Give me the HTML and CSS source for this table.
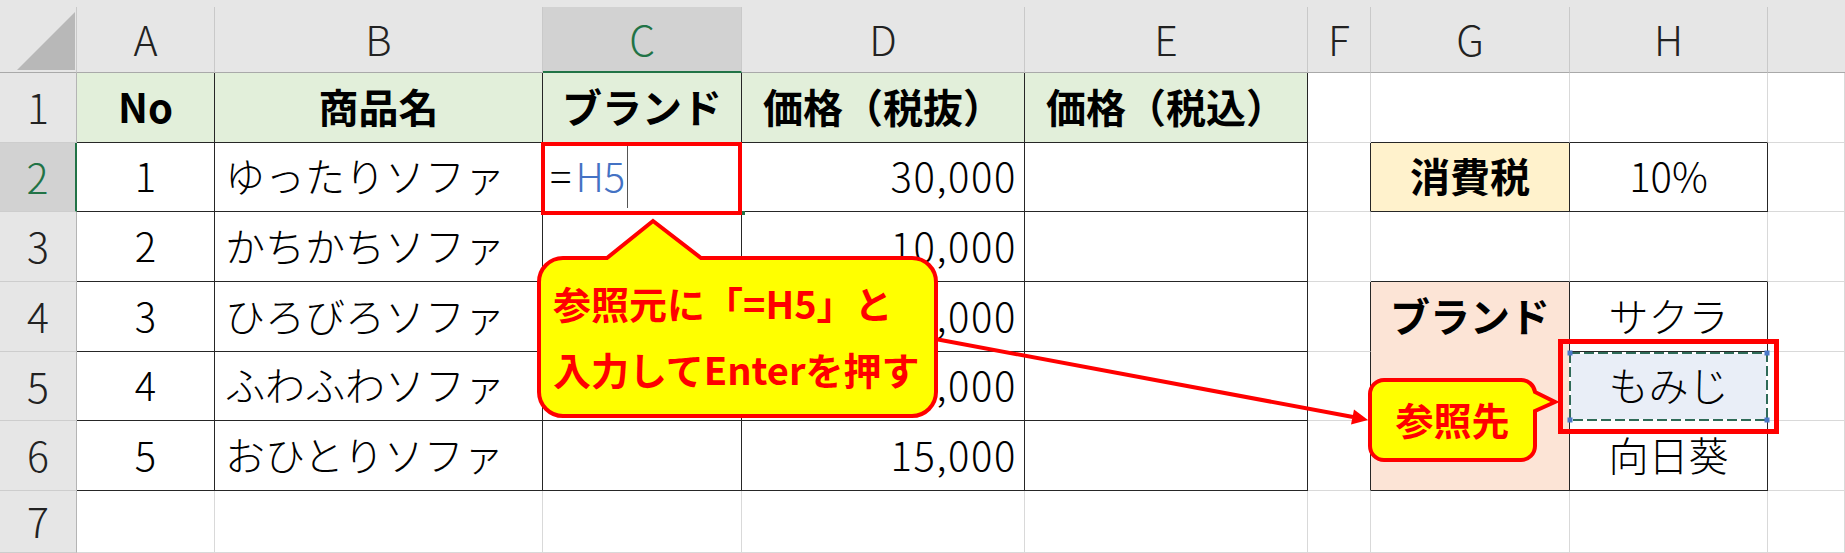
FILE: index.html
```html
<!DOCTYPE html>
<html lang="ja">
<head>
<meta charset="utf-8">
<title>参照</title>
<link rel="stylesheet" href="styles.css">
</head>
<body>
<div class="sheet">
  <div class="band"></div>
  <div class="hd corner"><svg class="tri" width="76" height="66" viewBox="0 0 76 66"><polygon points="17,63 75,63 75,5" fill="#b8b8b8"/></svg></div>
  <div class="hd">A</div>
  <div class="hd">B</div>
  <div class="hd sel">C</div>
  <div class="hd">D</div>
  <div class="hd">E</div>
  <div class="hd">F</div>
  <div class="hd">G</div>
  <div class="hd">H</div>
  <div class="hd end"></div>

  <div class="rh">1</div>
  <div class="c k th ctr">No</div>
  <div class="c k th ctr">商品名</div>
  <div class="c k th ctr">ブランド</div>
  <div class="c k th ctr">価格（税抜）</div>
  <div class="c k th ctr">価格（税込）</div>
  <div class="c"></div>
  <div class="c kb"></div>
  <div class="c kb"></div>
  <div class="c"></div>

  <div class="rh sel">2</div>
  <div class="c k ctr">1</div>
  <div class="c k lft">ゆったりソファ</div>
  <div class="c k edit"><span class="eq">=</span><span class="blue">H5</span><i class="caret"></i></div>
  <div class="c k num">30,000</div>
  <div class="c k"></div>
  <div class="c kr"></div>
  <div class="c k ctr bold tax">消費税</div>
  <div class="c k ctr">10%</div>
  <div class="c"></div>

  <div class="rh">3</div>
  <div class="c k ctr">2</div>
  <div class="c k lft">かちかちソファ</div>
  <div class="c k"></div>
  <div class="c k num">10,000</div>
  <div class="c k"></div>
  <div class="c"></div>
  <div class="c kb"></div>
  <div class="c kb"></div>
  <div class="c"></div>

  <div class="rh">4</div>
  <div class="c k ctr">3</div>
  <div class="c k lft">ひろびろソファ</div>
  <div class="c k"></div>
  <div class="c k num">20,000</div>
  <div class="c k"></div>
  <div class="c kr"></div>
  <div class="c k brand bold"><span class="brand-t">ブランド</span></div>
  <div class="c k ctr">サクラ</div>
  <div class="c"></div>

  <div class="rh">5</div>
  <div class="c k ctr">4</div>
  <div class="c k lft">ふわふわソファ</div>
  <div class="c k"></div>
  <div class="c k num">25,000</div>
  <div class="c k"></div>
  <div class="c kr"></div>
  <div class="c k ctr refcell">もみじ</div>
  <div class="c"></div>

  <div class="rh">6</div>
  <div class="c k ctr">5</div>
  <div class="c k lft">おひとりソファ</div>
  <div class="c k"></div>
  <div class="c k num">15,000</div>
  <div class="c k"></div>
  <div class="c kr"></div>
  <div class="c k ctr">向日葵</div>
  <div class="c"></div>

  <div class="rh">7</div>
  <div class="c"></div>
  <div class="c"></div>
  <div class="c"></div>
  <div class="c"></div>
  <div class="c"></div>
  <div class="c"></div>
  <div class="c"></div>
  <div class="c"></div>
  <div class="c"></div>

  <svg class="ov" width="1845" height="553" viewBox="0 0 1845 553">
    <rect x="741" y="211" width="4" height="4" fill="#217346"/>
    <rect x="543" y="144" width="197" height="69" fill="none" stroke="#ff0000" stroke-width="4"/>
    <rect x="1570" y="353" width="197" height="67" fill="none" stroke="#ffffff" stroke-width="2"/>
    <rect x="1570" y="353" width="197" height="67" fill="none" stroke="#2f6b58" stroke-width="2" stroke-dasharray="10 4"/>
    <rect x="1567.5" y="350.5" width="5" height="5" fill="#4a78c8"/>
    <rect x="1764.5" y="350.5" width="5" height="5" fill="#4a78c8"/>
    <rect x="1567.5" y="417.5" width="5" height="5" fill="#4a78c8"/>
    <rect x="1764.5" y="417.5" width="5" height="5" fill="#4a78c8"/>
    <rect x="1560.5" y="341.5" width="216" height="90" fill="none" stroke="#ff0000" stroke-width="5"/>
    <line x1="930" y1="338" x2="1353" y2="417" stroke="#ff0000" stroke-width="4"/>
    <polygon points="1368,420 1351,424.5 1354,409.5" fill="#ff0000"/>
    <path d="M563 258 L607 258 L653 221 L701 258 L912 258 A24 24 0 0 1 936 282 L936 392 A24 24 0 0 1 912 416 L563 416 A24 24 0 0 1 539 392 L539 282 A24 24 0 0 1 563 258 Z" fill="#ffff00" stroke="#ff0000" stroke-width="4" stroke-linejoin="miter"/>
    <path d="M1384 380 L1521 380 A14 14 0 0 1 1535 392 L1555 402 L1535 411 L1535 446 A14 14 0 0 1 1521 460 L1384 460 A14 14 0 0 1 1370 446 L1370 394 A14 14 0 0 1 1384 380 Z" fill="#ffff00" stroke="#ff0000" stroke-width="4" stroke-linejoin="miter"/>
  </svg>
  <div class="note note1">参照元に「=H5」と<br>入力してEnterを押す</div>
  <div class="note note2">参照先</div>
</div>
</body>
</html>
```

FILE: styles.css
```css
html, body {
  margin: 0;
  padding: 0;
  background: #ffffff;
}

.sheet {
  position: relative;
  display: grid;
  grid-template-columns: 77px 138px 328px 199px 283px 283px 63px 199px 198px 1fr;
  grid-template-rows: 7px 66px 70px 69px 70px 70px 69px 70px 1fr;
  width: 1845px;
  height: 553px;
  overflow: hidden;
  font-family: "Noto Sans CJK JP Light", "Noto Sans CJK JP DemiLight", "Noto Sans CJK JP", "Noto Sans", sans-serif;
  color: #000;
}

.band {
  grid-column: 1 / -1;
  background: #e6e6e6;
}

.hd {
  box-sizing: border-box;
  display: flex;
  align-items: center;
  justify-content: center;
  background: #e6e6e6;
  border-right: 1px solid #c9c9c9;
  border-bottom: 1px solid #a9a9a9;
  font-size: 41px;
  font-weight: 300;
  line-height: 1;
  color: #222;
  padding-bottom: 2px;
}

.hd.corner {
  position: relative;
  padding: 0;
  display: block;
}

.tri {
  display: block;
}

.hd.sel {
  background: #d2d2d2;
  color: #217346;
  border-bottom: 2px solid #217346;
}

.hd.end {
  border-right: none;
}

.rh {
  box-sizing: border-box;
  display: flex;
  align-items: center;
  justify-content: center;
  background: #e6e6e6;
  border-right: 1px solid #b4b4b4;
  border-bottom: 1px solid #cdcdcd;
  font-size: 41px;
  font-weight: 300;
  line-height: 1;
  color: #222;
  padding-bottom: 2px;
}

.rh.sel {
  background: #d2d2d2;
  color: #217346;
  border-right: 2px solid #217346;
}

.c {
  box-sizing: border-box;
  display: flex;
  align-items: center;
  background: #ffffff;
  border-right: 1px solid #d9d9d9;
  border-bottom: 1px solid #d9d9d9;
  font-size: 40px;
  font-weight: 300;
  line-height: 1;
  white-space: nowrap;
  padding-bottom: 4px;
}

.c.k {
  border-right-color: #262626;
  border-bottom-color: #262626;
}

.c.kb {
  border-bottom-color: #262626;
}

.c.kr {
  border-right-color: #262626;
}

.th {
  font-family: "Noto Sans CJK JP", "Noto Sans", sans-serif;
  background: #e2efda;
  font-weight: 700;
}

.ctr {
  justify-content: center;
}

.lft {
  padding-left: 10px;
}

.num {
  justify-content: flex-end;
  padding-right: 7px;
  letter-spacing: 1.6px;
}

.bold {
  font-family: "Noto Sans CJK JP", "Noto Sans", sans-serif;
  font-weight: 700;
}

.tax {
  background: #fff2cc;
}

.brand {
  grid-row: span 3;
  background: #fce4d6;
  align-items: flex-start;
  justify-content: center;
  padding-bottom: 0;
}

.brand-t {
  display: flex;
  align-items: center;
  height: 66px;
}

.refcell {
  background: #e9eef7;
}

.edit {
  padding-left: 7px;
  align-items: stretch;
  padding-bottom: 0;
}

.edit span {
  display: flex;
  align-items: center;
  padding-bottom: 4px;
}

.eq {
  padding-right: 4px;
}

.blue {
  color: #4472c4;
}

.caret {
  display: block;
  width: 1px;
  margin: 2px 0 3px 2px;
  background: #555;
}

.ov {
  position: absolute;
  left: 0;
  top: 0;
  pointer-events: none;
}

.note {
  position: absolute;
  font-family: "Noto Sans CJK JP", "Noto Sans", sans-serif;
  font-weight: 700;
  font-size: 38px;
  color: #ff0000;
  white-space: nowrap;
}

.note1 {
  left: 553px;
  top: 270px;
  line-height: 66px;
}

.note2 {
  left: 1370px;
  top: 380px;
  width: 165px;
  height: 80px;
  display: flex;
  align-items: center;
  justify-content: center;
  line-height: 1;
  padding-bottom: 2px;
  box-sizing: border-box;
}
```
